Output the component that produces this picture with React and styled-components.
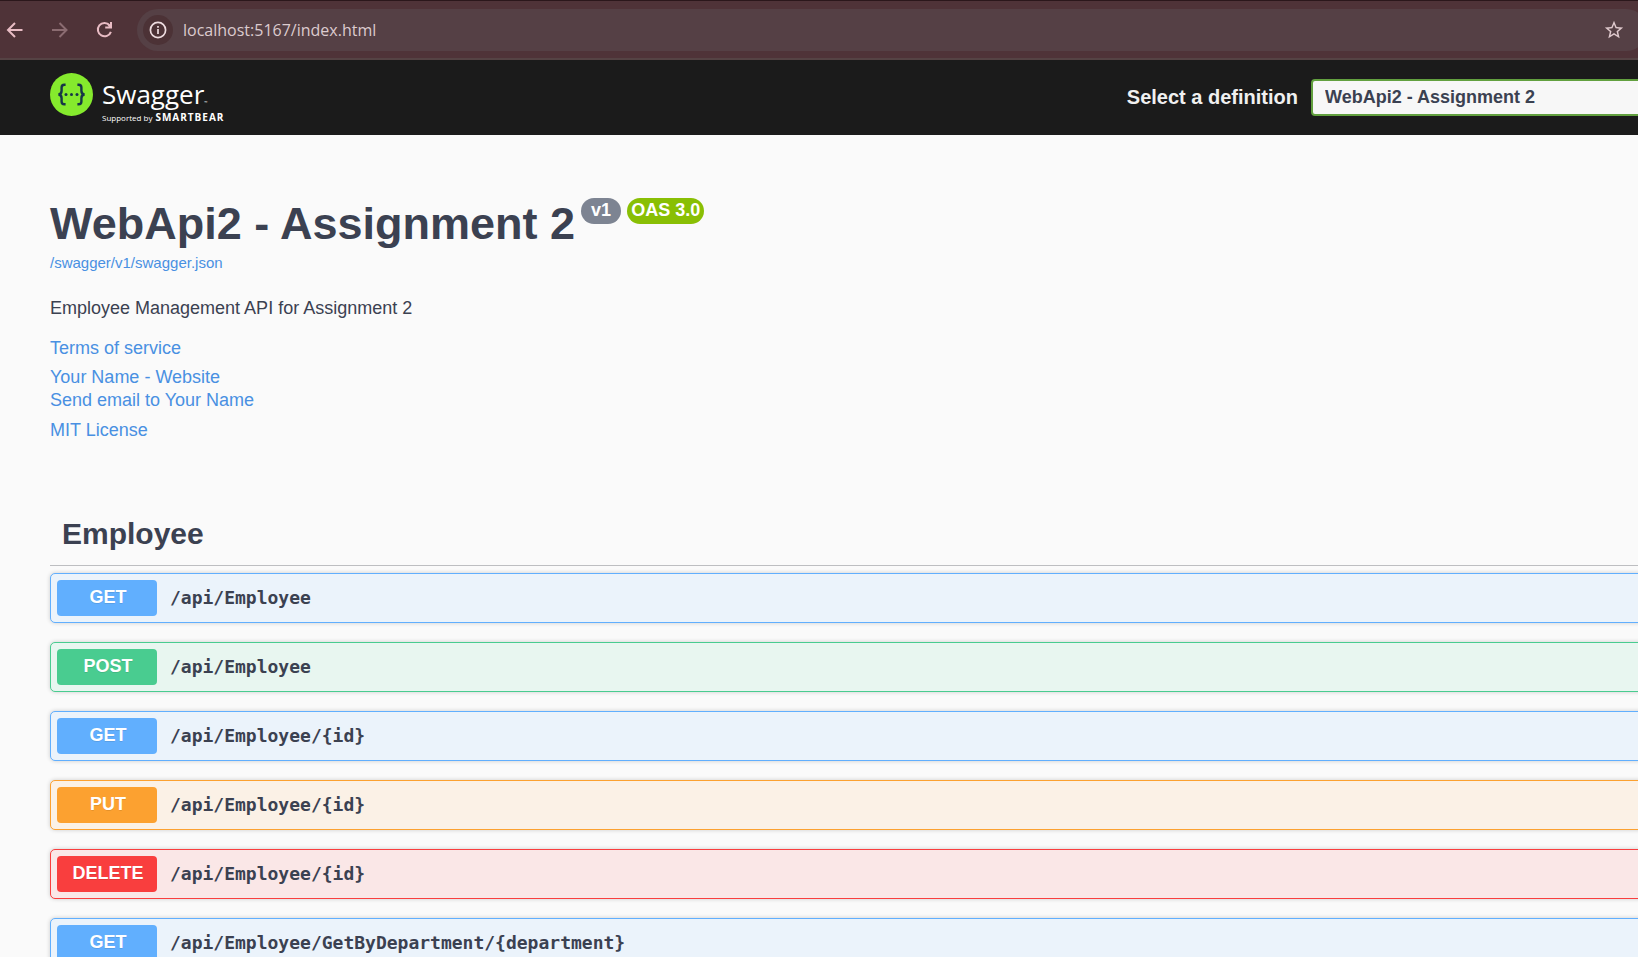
import React from "react";
import styled, { createGlobalStyle } from "styled-components";

const GlobalStyle = createGlobalStyle`
  * { box-sizing: border-box; }
  html, body { margin: 0; padding: 0; background: #fafafa; }
  body { overflow: hidden; }
  h1, h2, p { margin: 0; }
  button { font: inherit; cursor: pointer; }
`;

const sans = `"Liberation Sans", Arial, sans-serif`;

const Page = styled.div`
  min-height: 100vh;
  overflow: hidden;
  background: #fafafa;
  color: #3b4151;
  font-family: ${sans};
`;

const BrowserBar = styled.header`
  display: flex;
  align-items: center;
  height: 60px;
  margin-right: -9px;
  border-top: 1px solid #2b171b;
  border-bottom: 2px solid #554344;
  background: #4f3338;
`;

const NavButton = styled.button`
  display: flex;
  align-items: center;
  justify-content: center;
  flex: none;
  width: 45px;
  height: 36px;
  padding: 0;
  border: 0;
  background: none;
  color: ${(p) => (p.disabled ? "#8b6c71" : "#e8bcc4")};
`;

const NavGroup = styled.nav`
  display: flex;
  flex: none;
  margin-left: -8px;
  margin-right: 10px;
`;

const AddressBar = styled.div`
  display: flex;
  align-items: center;
  flex: 1;
  height: 42px;
  padding: 0 22px 0 6px;
  border-radius: 21px;
  background: #554045;
`;

const InfoButton = styled.button`
  display: flex;
  align-items: center;
  justify-content: center;
  flex: none;
  width: 30px;
  height: 30px;
  padding: 0;
  border: 0;
  border-radius: 50%;
  background: #4c3236;
  color: #eedde0;
`;

const AddressInput = styled.input`
  flex: 1;
  min-width: 0;
  height: 32px;
  margin-left: 10px;
  padding: 0;
  border: 0;
  outline: 0;
  background: transparent;
  color: #dccbce;
  font: 16px "Open Sans", "Noto Sans", sans-serif;
`;

const StarButton = styled(InfoButton)`
  width: 50px;
  margin-right: -14px;
  background: none;
  color: #dfc9cd;
`;

const TopBar = styled.div`
  display: flex;
  align-items: center;
  justify-content: space-between;
  height: 75px;
  margin-right: -24px;
  padding-left: 50px;
  background: #1b1b1b;
`;

const LogoLink = styled.a`
  display: flex;
  gap: 9px;
  height: 50px;
  color: #ffffff;
  text-decoration: none;
  font-family: "Open Sans", sans-serif;
`;

const LogoText = styled.span`
  display: flex;
  flex-direction: column;
`;

const LogoName = styled.span`
  height: 36px;
  font-size: 26px;
  line-height: 42px;
`;

const Trademark = styled.small`
  font-size: 4px;
`;

const LogoSupport = styled.span`
  display: flex;
  align-items: baseline;
  gap: 3px;
  font-size: 8px;
  line-height: 16px;
`;

const SmartBear = styled.strong`
  font-size: 10px;
  font-weight: 700;
  letter-spacing: 1px;
`;

const Definition = styled.label`
  display: flex;
  align-items: center;
  gap: 13px;
  color: #f0f0f0;
  font-size: 20px;
  font-weight: 700;
`;

const DefinitionSelect = styled.select`
  appearance: none;
  width: 351px;
  height: 37px;
  padding: 0 12px 2px;
  border: 2px solid #62a03f;
  border-radius: 4px;
  background: #f7f7f7;
  color: #3b4151;
  font: 700 18px ${sans};
`;

const Content = styled.main`
  padding-left: 50px;
`;

const Info = styled.section`
  display: flex;
  flex-direction: column;
  align-items: flex-start;
  padding-top: 62px;
`;

const TitleRow = styled.div`
  display: flex;
  align-items: flex-start;
  gap: 6px;
`;

const Title = styled.h1`
  padding: 2px 0;
  font-size: 45px;
  line-height: 50px;
`;

const Badge = styled.span`
  height: 26px;
  margin-top: 1px;
  padding: 0 ${(p) => (p.$wide ? 4 : 10)}px;
  border-radius: 13px;
  background: ${(p) => (p.$wide ? "#89bf04" : "#7d8492")};
  color: #ffffff;
  font-size: 18px;
  font-weight: 700;
  line-height: 24px;
`;

const Link = styled.a`
  color: #4990e2;
  text-decoration: none;
  font-size: ${(p) => (p.$small ? 15 : 18)}px;
  line-height: 23px;
`;

const Description = styled.p`
  margin: 23px 0 17px;
  font-size: 18px;
  line-height: 23px;
`;

const Contact = styled.div`
  display: flex;
  flex-direction: column;
  margin: 6px 0 7px;
`;

const Tag = styled.h2`
  margin-top: 62px;
  padding: 8px 12px 9px;
  border-bottom: 1px solid #bdbec1;
  font-size: 30px;
  line-height: 44px;
`;

const Operations = styled.div`
  display: flex;
  flex-direction: column;
  gap: 19px;
  margin-right: -24px;
  padding-top: 7px;
`;

const palette = {
  GET: ["#61affe", "#ebf3fb"],
  POST: ["#49cc90", "#e8f6f0"],
  PUT: ["#fca130", "#fbf1e6"],
  DELETE: ["#f93e3e", "#fae7e7"],
};

const Operation = styled.button`
  display: flex;
  align-items: center;
  gap: 13px;
  height: 50px;
  padding: 0 6px;
  border: 1px solid ${(p) => palette[p.$method][0]};
  border-radius: 5px;
  background: ${(p) => palette[p.$method][1]};
  box-shadow: 0 0 4px rgba(0, 0, 0, 0.19);
  color: #3b4151;
  text-align: left;
`;

const Method = styled.span`
  flex: none;
  width: 100px;
  height: 36px;
  padding-left: 2px;
  border-radius: 4px;
  background: ${(p) => palette[p.$method][0]};
  color: #ffffff;
  font: 700 18px/34px ${sans};
  text-align: center;
  text-shadow: 0 1px 0 rgba(0, 0, 0, 0.1);
`;

const Path = styled.span`
  font: 700 18px/24px "DejaVu Sans Mono", monospace;
`;

const operations = [
  ["GET", "/api/Employee"],
  ["POST", "/api/Employee"],
  ["GET", "/api/Employee/{id}"],
  ["PUT", "/api/Employee/{id}"],
  ["DELETE", "/api/Employee/{id}"],
  ["GET", "/api/Employee/GetByDepartment/{department}"],
];

const Arrow = ({ forward }) => (
  <svg width="18" height="18" viewBox="0 0 18 18" fill="none" stroke="currentColor" strokeWidth="2" aria-hidden="true">
    {forward ? <path d="M1 9H15.5M8.5 2l7 7-7 7" /> : <path d="M16.5 9H2M9 2L2 9l7 7" />}
  </svg>
);

const Reload = () => (
  <svg width="18" height="18" viewBox="0 0 18 18" fill="none" stroke="currentColor" strokeWidth="2" aria-hidden="true">
    <path d="M13.6 4.2A6.7 6.7 0 1 0 14.9 10.8M15 1V6.5H9.2M15 6.5L12 3" />
  </svg>
);

const InfoIcon = () => (
  <svg width="18" height="18" viewBox="0 0 18 18" fill="none" stroke="currentColor" strokeWidth="1.7" aria-hidden="true">
    <circle cx="9" cy="9" r="7.6" />
    <path d="M9 8v5M9 5v1.8" />
  </svg>
);

const Star = () => (
  <svg width="22" height="22" viewBox="0 0 24 24" fill="currentColor" aria-hidden="true">
    <path d="M22 9.24l-7.19-.62L12 2 9.19 8.63 2 9.24l5.46 4.73L5.82 21 12 17.27 18.18 21l-1.63-7.03L22 9.24zM12 15.4l-3.76 2.27 1-4.28-3.32-2.88 4.38-.38L12 6.1l1.71 4.04 4.38.38-3.32 2.88 1 4.28L12 15.4z" />
  </svg>
);

const SwaggerMark = () => (
  <svg width="43" height="43" viewBox="0 0 43 43" aria-hidden="true">
    <circle cx="21.5" cy="21.5" r="21.5" fill="#85ea2d" />
    <g fill="none" stroke="#173647" strokeWidth="2.4">
      <path d="M15.6 11.8h-1.3q-2.7 0-2.7 2.8v3.2q0 3.5-3.2 3.7 3.2.2 3.2 3.7v3.2q0 2.8 2.7 2.8h1.3" />
      <path d="M27.4 11.8h1.3q2.7 0 2.7 2.8v3.2q0 3.5 3.2 3.7-3.2.2-3.2 3.7v3.2q0 2.8-2.7 2.8h-1.3" />
    </g>
    <g fill="#173647">
      <circle cx="16" cy="21.5" r="1.5" />
      <circle cx="21.5" cy="21.5" r="1.5" />
      <circle cx="27" cy="21.5" r="1.5" />
    </g>
  </svg>
);

export default function App() {
  return (
    <Page>
      <GlobalStyle />
      <BrowserBar>
        <NavGroup>
          <NavButton aria-label="Back"><Arrow /></NavButton>
          <NavButton aria-label="Forward" disabled><Arrow forward /></NavButton>
          <NavButton aria-label="Reload"><Reload /></NavButton>
        </NavGroup>
        <AddressBar>
          <InfoButton aria-label="Site information"><InfoIcon /></InfoButton>
          <AddressInput aria-label="Address" defaultValue="localhost:5167/index.html" />
          <StarButton aria-label="Bookmark"><Star /></StarButton>
        </AddressBar>
      </BrowserBar>

      <TopBar>
        <LogoLink href="#">
          <SwaggerMark />
          <LogoText>
            <LogoName>Swagger<Trademark>™</Trademark></LogoName>
            <LogoSupport>Supported by <SmartBear>SMARTBEAR</SmartBear></LogoSupport>
          </LogoText>
        </LogoLink>
        <Definition>
          Select a definition
          <DefinitionSelect>
            <option>WebApi2 - Assignment 2</option>
          </DefinitionSelect>
        </Definition>
      </TopBar>

      <Content>
        <Info>
          <TitleRow>
            <Title>WebApi2 - Assignment 2</Title>
            <Badge>v1</Badge>
            <Badge $wide>OAS 3.0</Badge>
          </TitleRow>
          <Link $small href="#">/swagger/v1/swagger.json</Link>
          <Description>Employee Management API for Assignment 2</Description>
          <Link href="#">Terms of service</Link>
          <Contact>
            <Link href="#">Your Name - Website</Link>
            <Link href="#">Send email to Your Name</Link>
          </Contact>
          <Link href="#">MIT License</Link>
        </Info>
        <Tag>Employee</Tag>
        <Operations>
          {operations.map(([method, path]) => (
            <Operation key={method + path} $method={method}>
              <Method $method={method}>{method}</Method>
              <Path>{path}</Path>
            </Operation>
          ))}
        </Operations>
      </Content>
    </Page>
  );
}
